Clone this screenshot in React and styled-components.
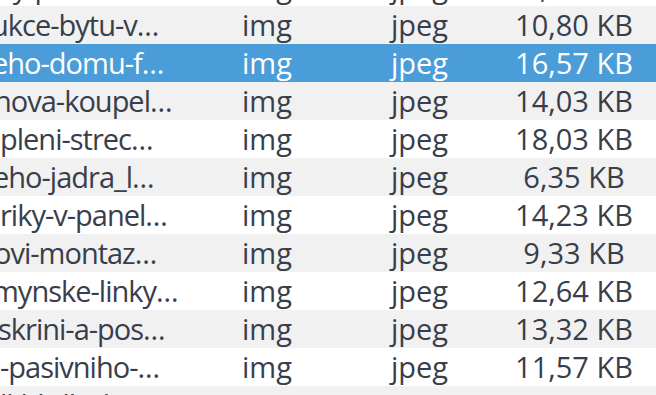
import React from "react";
import styled, { createGlobalStyle } from "styled-components";

const Global = createGlobalStyle`
  html, body { margin: 0; padding: 0; background: #ffffff; }
  body { font-family: "Open Sans", "Noto Sans", sans-serif; }
`;

const Viewport = styled.div`
  width: 656px;
  height: 395px;
  overflow: hidden;
  background: #ffffff;
`;

const List = styled.div`
  display: flex;
  flex-direction: column;
  margin-top: -32px;
`;

const Row = styled.div`
  display: grid;
  grid-template-columns: 242px 149px 101px 164px;
  align-items: center;
  height: 38px;
  font-size: 29px;
  line-height: 38px;
  color: ${(p) => (p.$selected ? "#ffffff" : "#383e4b")};
  background: ${(p) =>
    p.$selected ? "#4a9dd8" : p.$odd ? "#f1f1f1" : "#ffffff"};
`;

const NameCell = styled.div`
  overflow: hidden;
  width: 200px;
  white-space: nowrap;
  letter-spacing: -1px;
`;

const NameText = styled.span`
  display: inline-block;
  margin-left: ${(p) => -p.$shift}px;
`;

const Cell = styled.div`
  white-space: nowrap;
`;

const SizeCell = styled.div`
  white-space: nowrap;
  text-align: center;
`;

const rows = [
  { name: "oky-pro-deti…", shift: 18, size: "7,21 KB" },
  { name: "ukce-bytu-v…", shift: 9, size: "10,80 KB" },
  { name: "eho-domu-f…", shift: 8, size: "16,57 KB", selected: true },
  { name: "nova-koupel…", shift: 6, size: "14,03 KB" },
  { name: "pleni-strec…", shift: 0, size: "18,03 KB" },
  { name: "eho-jadra_l…", shift: 7, size: "6,35 KB" },
  { name: "riky-v-panel…", shift: 0, size: "14,23 KB" },
  { name: "ovi-montaz…", shift: 6, size: "9,33 KB" },
  { name: "mynske-linky…", shift: 8, size: "12,64 KB" },
  { name: "skrini-a-pos…", shift: 2, size: "13,32 KB" },
  { name: "-pasivniho-…", shift: 0, size: "11,57 KB" },
  { name: "lkbl-dlazby…", shift: 0, size: "8,97 KB" },
];

export default function App() {
  return (
    <>
      <Global />
      <Viewport>
        <List>
          {rows.map((r, i) => (
            <Row key={i} $selected={r.selected} $odd={i % 2 === 1}>
              <NameCell>
                <NameText $shift={r.shift}>{r.name}</NameText>
              </NameCell>
              <Cell>img</Cell>
              <Cell>jpeg</Cell>
              <SizeCell>{r.size}</SizeCell>
            </Row>
          ))}
        </List>
      </Viewport>
    </>
  );
}
